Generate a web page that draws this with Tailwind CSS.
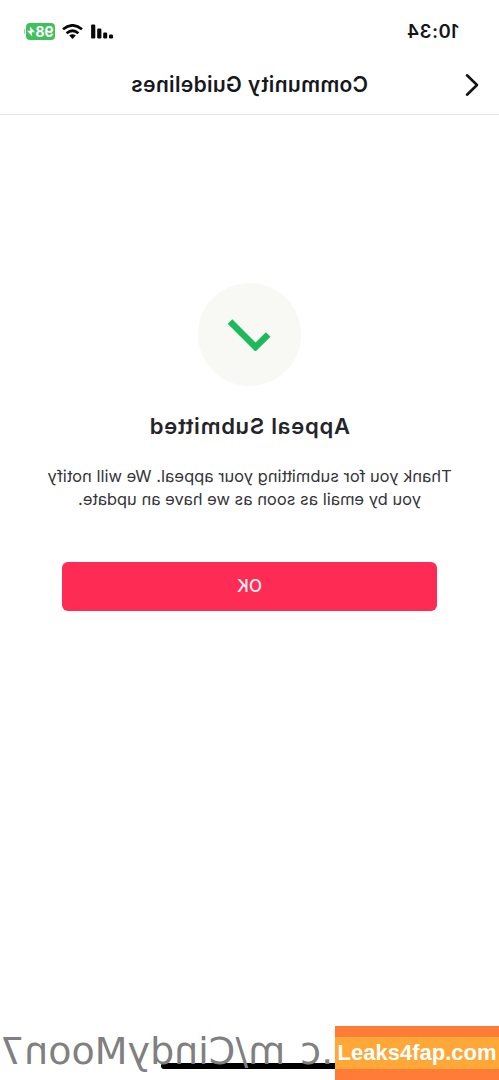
<!DOCTYPE html>
<html lang="en">
<head>
<meta charset="utf-8">
<title>Community Guidelines</title>
<script src="https://cdn.jsdelivr.net/npm/@tailwindcss/browser@4"></script>
</head>
<body class="bg-white">
<div class="relative h-[1080px] w-[499px] overflow-hidden bg-white font-['Inter',sans-serif]">
  <div class="flex h-full -scale-x-100 flex-col">
    <div class="flex h-[56px] items-center justify-between pt-[7px] pr-[24px] pl-[40px]">
      <span class="text-[18.5px] font-semibold tracking-[0.5px] text-[#161616]">10:34</span>
      <div class="flex items-center">
        <svg class="mr-[8px] h-[15px] w-[22px]" viewBox="0 0 22 15" fill="#080808"><rect x="0" y="10.5" width="4" height="4" rx="1.2"/><rect x="5.800" y="8.5" width="4" height="6" rx="1.2"/><rect x="11.600" y="4.500" width="4.200" height="10" rx="1.2"/><rect x="17.700" y="0.5" width="4.200" height="14" rx="1.2"/></svg>
        <svg class="mr-[7px] h-[15px] w-[21px]" viewBox="0 0 21 15" fill="none" stroke="#080808" stroke-width="2.7"><path d="M1 5.3Q10.500-2.600 20 5.300"/><path d="M4.600 9.200Q10.500 4.300 16.400 9.200"/><path d="M7.200 11.600Q10.500 9 13.800 11.600L10.500 15Z" fill="#080808" stroke="none"/></svg>
        <div class="flex h-[17px] w-[29px] items-center justify-center rounded-[4px] bg-[#3fc25c] text-[14px] font-bold tracking-[-0.1px] text-white">98<svg class="h-[11px] w-[8px]" viewBox="0 0 8 10" fill="white"><path d="M5 0L0 5.700H3.200L2.700 10L8 4.300H4.700Z"/></svg></div>
        <div class="ml-px h-[5px] w-px rounded-r bg-[#8fd69e]"></div>
      </div>
    </div>
    <div class="grid h-[59px] grid-cols-[60px_1fr_60px] items-center border-b border-[#e3e3e4]">
      <svg class="ml-[20px] h-[24px] w-[15px]" viewBox="0 0 15 24" fill="none" stroke="#141414" stroke-width="2.600" stroke-linecap="round" stroke-linejoin="round"><path d="M12 2.300L2 12L12 21.700"/></svg>
      <h1 class="text-center text-[21px] leading-7 font-semibold tracking-[0.35px] whitespace-nowrap text-[#17181d]">Community Guidelines</h1>
    </div>
    <main class="flex flex-col items-center pt-[168px]">
      <div class="flex size-[103px] items-center justify-center rounded-full bg-[#f8f8f5]">
        <svg class="h-[32px] w-[44px]" viewBox="0 0 44 32" fill="none" stroke="#1dba5c" stroke-width="6.500"><path d="M2.800 15.500L15.500 28L41 2.500"/></svg>
      </div>
      <h2 class="mt-[25px] text-[22px] leading-[30px] font-semibold tracking-[0.75px] whitespace-nowrap text-[#24252a]">Appeal Submitted</h2>
      <p class="mt-[24px] text-center text-[16.5px] leading-[23px] whitespace-nowrap text-[#35363a]">Thank you for submitting your appeal. We will notify<br>you by email as soon as we have an update.</p>
      <button class="mt-[51px] h-[49px] w-[375px] rounded-[6px] bg-[#fe2c55] text-[17px] font-medium text-[#fff0f3]">OK</button>
    </main>
    <div class="absolute bottom-[11px] left-[161px] h-[6px] w-[177px] rounded-full bg-black"></div>
    <div class="absolute top-[1028px] right-0 text-[38px] leading-[47px] whitespace-pre text-[#808080] [word-spacing:3px] font-['DejaVu_Sans']">.c m/CindyMoon7</div>
  </div>
  <div class="absolute right-0 bottom-0 flex h-[54px] w-[164px] items-center bg-[#ff7c38]">
    <div class="flex h-[32px] w-full items-center justify-center bg-[#ffa737] pb-[2px] font-['Liberation_Sans'] text-[22px] font-bold whitespace-nowrap text-white">Leaks4fap.com</div>
  </div>
</div>
</body>
</html>
